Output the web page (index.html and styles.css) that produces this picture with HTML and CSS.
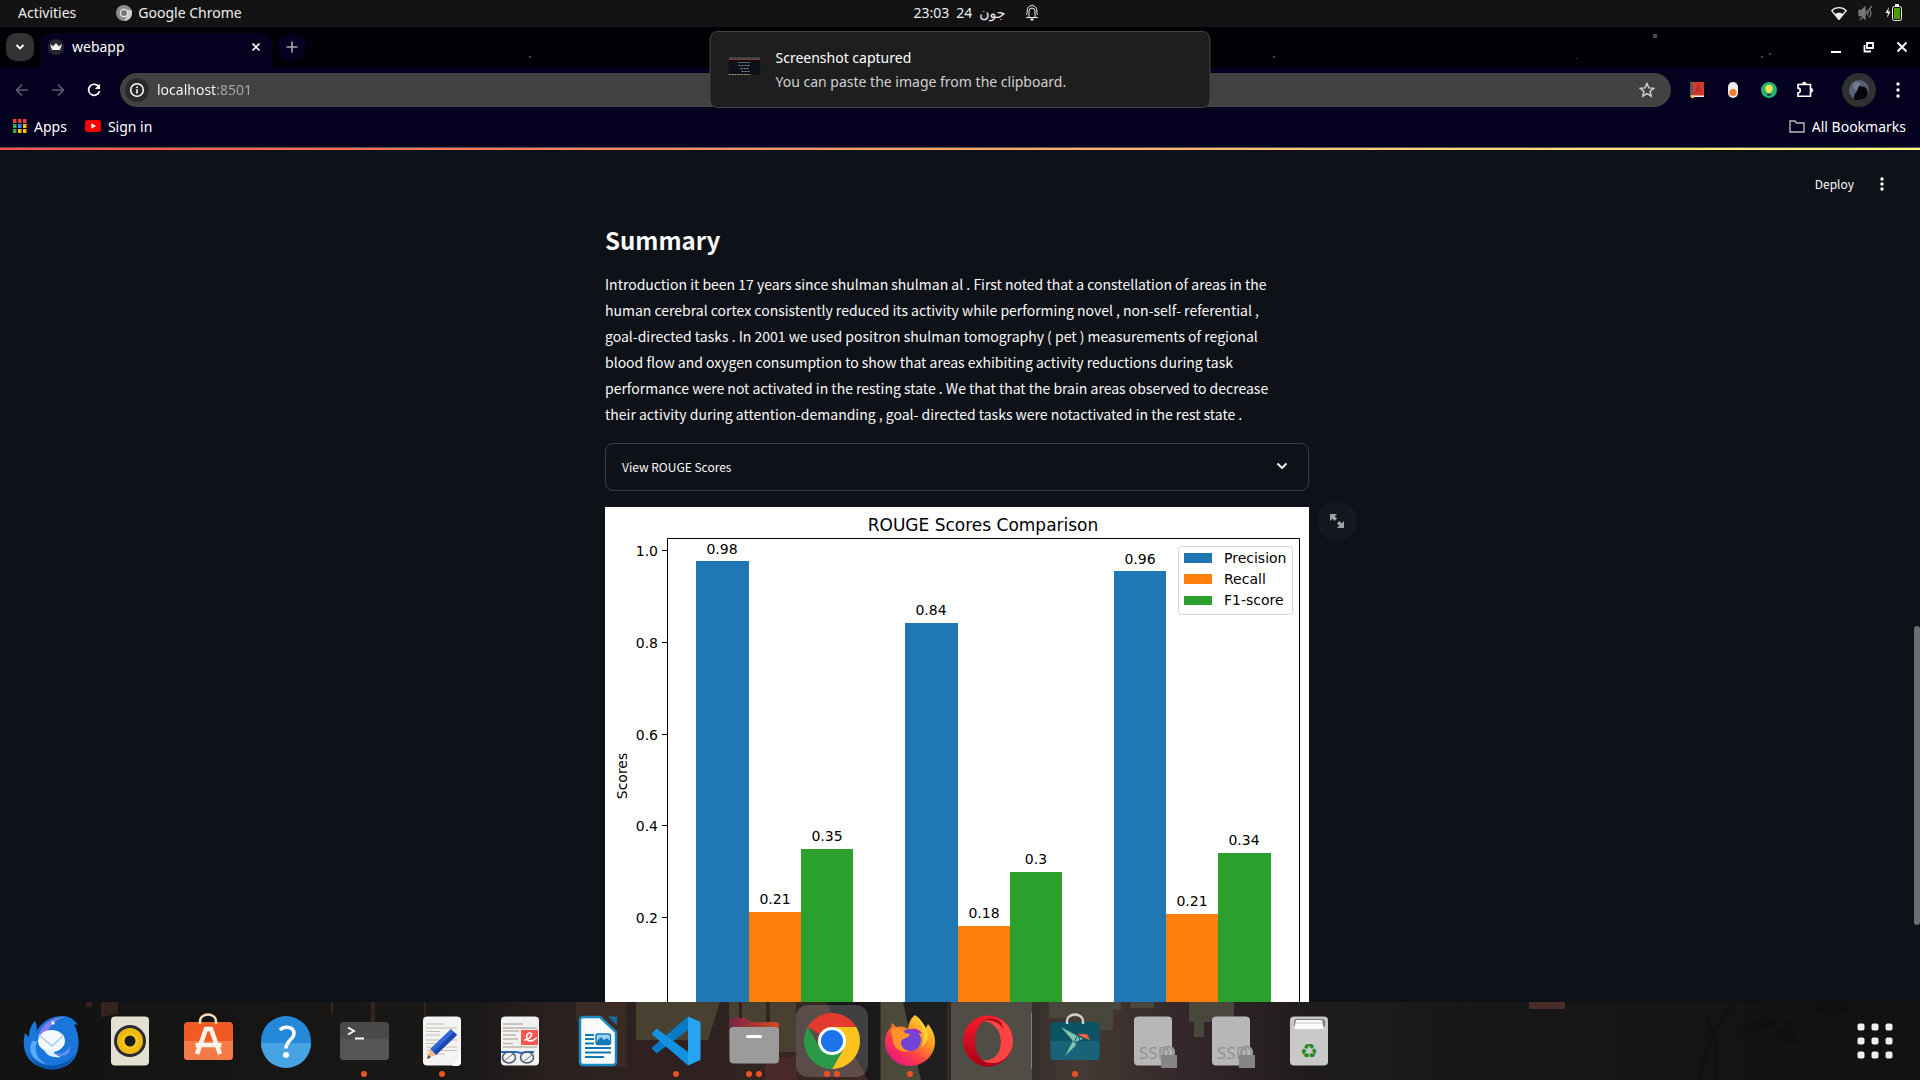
FILE: index.html
```html
<!DOCTYPE html>
<html lang="en">
<head>
<meta charset="utf-8">
<title>webapp</title>
<link rel="stylesheet" href="styles.css">
</head>
<body>
<div class="desktop">

  <header class="topbar">
    <div class="topbar-side">
      <button class="top-btn">Activities</button>
      <button class="top-btn app-menu">
        <svg width="16" height="16" viewBox="0 0 16 16"><circle cx="8" cy="8" r="8" fill="#8c8c8c"/><path d="M8 5h7.4A8 8 0 0 1 8 16l3.500-6z" fill="#cfcfcf"/><circle cx="8" cy="8" r="4.200" fill="#e8e8e8"/><circle cx="8" cy="8" r="3" fill="#777"/></svg>
        Google Chrome
      </button>
    </div>
    <button class="top-btn clock"><span>23:03</span><span>24</span><span lang="ur">جون</span>
      <svg class="bell" width="14" height="17" viewBox="0 0 14 17" fill="none" stroke="#eee"><path d="M1 13.500h12M4 13V7a3 3 0 0 1 6 0v6M1.500 11c.5-1 .7-2 .7-4.500a4.800 5 0 0 1 9.600 0c0 2.500.2 3.500.7 4.500"/><path d="M5.500 15h3l-1.500 1.500z" fill="#eee"/></svg>
    </button>
    <div class="topbar-side status">
      <svg width="16" height="14" viewBox="0 0 16 14"><path d="M8 13.500L.8 4.600C4.500.5 11.500.5 15.200 4.600z" fill="none" stroke="#eee" stroke-width="1.300"/><path d="M8 13.500L3.800 8.300c2-2 6.400-2 8.400 0z" fill="#eee"/></svg>
      <svg width="16" height="16" viewBox="0 0 16 16" fill="none" stroke="#777" stroke-width="1.300"><path d="M1 5.500h2.500L7 2v12l-3.500-3.500H1z" fill="#777"/><path d="M9 5.500c1.500 1.500 1.500 3.500 0 5M11 3.500c2.600 2.600 2.600 6.400 0 9M2 15L14 1"/></svg>
      <svg width="17" height="17" viewBox="0 0 17 17"><path d="M4 3L.5 9H3l-1 5 3.500-6.500H3.200z" fill="#eee"/><rect x="7.500" y="2.500" width="9" height="14" rx="2" fill="none" stroke="#eee"/><rect x="10" y="0" width="4" height="2" fill="#eee"/><rect x="9" y="4" width="6" height="11" fill="#4e9a06"/></svg>
    </div>
  </header>

  <section class="tabstrip">
    <button class="tab-search" aria-label="Search tabs"><svg width="10" height="10" viewBox="0 0 10 10" fill="none" stroke="#fff" stroke-width="1.800"><path d="M1.500 3L5 6.500 8.500 3"/></svg></button>
    <div class="tab">
      <svg width="16" height="16" viewBox="0 0 16 16"><circle cx="8" cy="8" r="8" fill="#262730"/><path d="M2 5l3 2.200L8 4l3 3.200L14 5l-2 6H4z" fill="#f2f2f2"/></svg>
      <span class="tab-title">webapp</span>
      <button class="icon-btn small" aria-label="Close tab"><svg width="10" height="10" viewBox="0 0 10 10" stroke="#fff" stroke-width="1.700"><path d="M1.500 1.500l7 7M8.500 1.500l-7 7"/></svg></button>
    </div>
    <button class="new-tab" aria-label="New tab"><svg width="12" height="12" viewBox="0 0 12 12" stroke="#aaa" stroke-width="1.600"><path d="M6 .5v11M.5 6h11"/></svg></button>
    <svg class="stars" fill="#4a4a48"><rect x="223" y="29" width="2" height="2"/><rect x="967" y="29" width="2" height="2"/><rect x="1347" y="7" width="4" height="4"/><rect x="1270" y="31" width="1" height="1"/><rect x="1455" y="29" width="2" height="2"/><rect x="1463" y="26" width="2" height="2"/></svg>
    <div class="window-controls">
      <button class="icon-btn" aria-label="Minimise"><svg width="12" height="12" viewBox="0 0 12 12"><path d="M1 10h10v2H1z" fill="#fff"/></svg></button>
      <button class="icon-btn" aria-label="Restore"><svg width="12" height="12" viewBox="0 0 12 12" fill="none" stroke="#fff" stroke-width="1.800"><path d="M4 2h6v5H4zM1.500 4v6.500H8"/></svg></button>
      <button class="icon-btn" aria-label="Close"><svg width="12" height="12" viewBox="0 0 12 12" stroke="#fff" stroke-width="1.900"><path d="M1.500 1.500l9 9M10.500 1.500l-9 9"/></svg></button>
    </div>
  </section>

  <section class="toolbar">
    <div class="nav-buttons">
      <button class="icon-btn" aria-label="Back"><svg width="14" height="14" viewBox="0 0 14 14" fill="none" stroke="#5d5b70" stroke-width="1.600"><path d="M13 7H2M7 1.500L1.500 7 7 12.500"/></svg></button>
      <button class="icon-btn" aria-label="Forward"><svg width="14" height="14" viewBox="0 0 14 14" fill="none" stroke="#5d5b70" stroke-width="1.600"><path d="M1 7h11M7 1.500L12.500 7 7 12.500"/></svg></button>
      <button class="icon-btn" aria-label="Reload"><svg width="14" height="14" viewBox="0 0 14 14"><path d="M12 4.200A5.500 5.500 0 1 0 12.500 8" fill="none" stroke="#fff" stroke-width="1.700"/><path d="M13 .8V6H7.800z" fill="#fff"/></svg></button>
    </div>
    <div class="omnibox">
      <button class="site-info" aria-label="Site information"><svg width="16" height="16" viewBox="0 0 16 16"><circle cx="8" cy="8" r="6.300" fill="none" stroke="#fff" stroke-width="1.500"/><path d="M7.200 7.200h1.600v4.300H7.200zM7.200 4.500h1.600v1.600H7.200z" fill="#fff"/></svg></button>
      <input class="address" type="text" aria-label="Address" value="localhost:8501">
      <button class="icon-btn" aria-label="Bookmark this tab"><svg width="16" height="16" viewBox="0 0 16 16" fill="none" stroke="#ccc" stroke-width="1.500"><path d="M8 1.500l1.900 4.400 4.800.4-3.600 3.100 1.100 4.700L8 11.600l-4.200 2.500 1.100-4.700L1.300 6.300l4.800-.4z"/></svg></button>
    </div>
    <div class="extensions">
      <button class="icon-btn" aria-label="Dictionary"><svg width="16" height="16" viewBox="0 0 16 16"><path d="M1 0h14v14H1z" fill="#d93a2f"/><path d="M1 0h3v15H1z" fill="#5a5a5a"/><path d="M4 13.500h11V15H4z" fill="#eee"/><path d="M6.500 11L9.300 3l2.900 8M7.500 8.500h3.700" fill="none" stroke="#b52a20" stroke-width="1.300"/><path d="M2 13h3v3H2z" fill="#f6c23c"/></svg></button>
      <button class="icon-btn" aria-label="Reader"><svg width="16" height="16" viewBox="0 0 16 16"><rect x="3" y="0" width="10" height="16" rx="5" fill="#ececec"/><circle cx="8" cy="10.500" r="3.600" fill="#f5822b"/></svg></button>
      <button class="icon-btn" aria-label="Ideas"><svg width="16" height="16" viewBox="0 0 16 16"><circle cx="8" cy="8" r="8" fill="#22b573"/><path d="M8 2.500a3.800 3.800 0 0 1 2.200 6.900V11H5.800V9.400A3.800 3.800 0 0 1 8 2.500z" fill="#ffdf4d"/><path d="M6 11.500h4V14H6z" fill="#3d4a45"/></svg></button>
      <button class="icon-btn" aria-label="Extensions"><svg width="18" height="18" viewBox="0 0 18 18" fill="none" stroke="#fff" stroke-width="1.600"><path d="M2 3.500h12.500v11.700H2v-3.500a2.300 2.300 0 0 0 0-4.600z"/><path d="M6.500 3a1.800 1.800 0 0 1 3.600 0zM15 7.500a1.800 1.800 0 0 1 0 3.600z" fill="#fff" stroke-width="1"/></svg></button>
    </div>
    <button class="avatar" aria-label="Profile"><svg width="20" height="20" viewBox="0 0 20 20"><circle cx="10" cy="10" r="10" fill="#596078"/><circle cx="8" cy="6" r="4" fill="#737b91"/><path d="M5 19c0-4 1-6 3-7.500L9.500 7l2-2 1 2 2.500-.5L18 9c2 5 0 9-5 10.500C9 20.500 6.500 20 5 19z" fill="#06070c"/></svg></button>
    <button class="icon-btn" aria-label="Menu"><svg width="4" height="16" viewBox="0 0 4 16" fill="#fff"><circle cx="2" cy="2" r="1.700"/><circle cx="2" cy="8" r="1.700"/><circle cx="2" cy="14" r="1.700"/></svg></button>
  </section>

  <nav class="bookmarks">
    <a class="bookmark" href="#apps"><svg width="14" height="14" viewBox="0 0 14 14"><path d="M0 0h3.500v4H0zM5 0h3.500v4H5zM10 0h3.500v4H10z" fill="#ea4335"/><path d="M0 5h3.500v4H0zM0 10h3.500v4H0z" fill="#34a853"/><path d="M5 5h3.500v4H5z" fill="#4285f4"/><path d="M10 5h3.500v4H10zM5 10h3.500v4H5zM10 10h3.500v4H10z" fill="#fbbc04"/></svg>Apps</a>
    <a class="bookmark" href="#signin"><svg width="16" height="12" viewBox="0 0 16 12"><rect width="16" height="12" rx="3" fill="#f00"/><path d="M6.300 3.300L11 6 6.300 8.700z" fill="#fff"/></svg>Sign in</a>
    <a class="bookmark all" href="#all"><svg width="16" height="13" viewBox="0 0 16 13" fill="none" stroke="#bbb" stroke-width="1.400"><path d="M1 11.500V1h5l1.500 2H15v9H1z"/></svg>All Bookmarks</a>
  </nav>

  <main class="app">
    <div class="decoration"></div>
    <header class="app-header">
      <button class="deploy">Deploy</button>
      <button class="icon-btn" aria-label="App menu"><svg width="4" height="14" viewBox="0 0 4 14" fill="#fafafa"><circle cx="2" cy="2" r="1.700"/><circle cx="2" cy="7" r="1.700"/><circle cx="2" cy="12" r="1.700"/></svg></button>
    </header>
    <div class="column">
      <h2>Summary</h2>
      <p>Introduction it been 17 years since shulman shulman al . First noted that a constellation of areas in the<br>human cerebral cortex consistently reduced its activity while performing novel , non-self- referential ,<br>goal-directed tasks . In 2001 we used positron shulman tomography ( pet ) measurements of regional<br>blood flow and oxygen consumption to show that areas exhibiting activity reductions during task<br>performance were not activated in the resting state . We that that the brain areas observed to decrease<br>their activity during attention-demanding , goal- directed tasks were notactivated in the rest state .</p>
      <details class="expander">
        <summary><span>View ROUGE Scores</span><svg width="12" height="12" viewBox="0 0 12 12" fill="none" stroke="#fafafa" stroke-width="1.900"><path d="M1.500 3.500L6 8l4.500-4.500"/></svg></summary>
      </details>
      <figure class="chart">
        <svg class="plot" viewBox="0 0 704 560" role="img" aria-label="ROUGE Scores Comparison">
          <rect width="704" height="560" fill="#fff"/>
          <g fill="#1f77b4"><rect x="91" y="54" width="53" height="449"/><rect x="300" y="116" width="53" height="387"/><rect x="509" y="64" width="52" height="439"/></g>
          <g fill="#ff7f0e"><rect x="144" y="405" width="52" height="98"/><rect x="353" y="419" width="52" height="84"/><rect x="561" y="407" width="52" height="96"/></g>
          <g fill="#2ca02c"><rect x="196" y="342" width="52" height="161"/><rect x="405" y="365" width="52" height="138"/><rect x="613" y="346" width="53" height="157"/></g>
          <path d="M62.500 503V31.500H694.500V503M57 43.500h5M57 135.500h5M57 227.500h5M57 318.500h5M57 410.500h5" fill="none" stroke="#000"/>
          <text class="plot-title" x="378" y="24" text-anchor="middle">ROUGE Scores Comparison</text>
          <g class="plot-text" text-anchor="end"><text x="53" y="49">1.0</text><text x="53" y="141">0.8</text><text x="53" y="233">0.6</text><text x="53" y="324">0.4</text><text x="53" y="416">0.2</text></g>
          <g class="plot-text" text-anchor="middle">
            <text x="117" y="47">0.98</text><text x="170" y="397">0.21</text><text x="222" y="334">0.35</text>
            <text x="326" y="108">0.84</text><text x="379" y="411">0.18</text><text x="431" y="357">0.3</text>
            <text x="535" y="57">0.96</text><text x="587" y="399">0.21</text><text x="639" y="338">0.34</text>
            <text transform="translate(22 269) rotate(-90)">Scores</text>
          </g>
          <rect x="573.500" y="39.500" width="114" height="68" rx="3" fill="#fff" stroke="#d4d4d4"/>
          <path d="M579 46h28v10h-28z" fill="#1f77b4"/><path d="M579 67h28v10h-28z" fill="#ff7f0e"/><path d="M579 89h28v9h-28z" fill="#2ca02c"/>
          <g class="plot-text"><text x="619" y="56">Precision</text><text x="619" y="77">Recall</text><text x="619" y="98">F1-score</text></g>
        </svg>
        <button class="fullscreen" aria-label="View fullscreen"><svg width="14" height="14" viewBox="0 0 14 14" fill="#a0a2a6"><path d="M0 0h7L4.700 2.300l2.300 2.300L4.600 7 2.300 4.700 0 7zM14 14H7l2.300-2.300L7 9.400 9.400 7l2.300 2.300L14 7z"/></svg></button>
      </figure>
    </div>
    <div class="scroll-thumb"></div>
  </main>

  <nav class="dock" aria-label="Dock">
    <svg class="wallpaper" viewBox="0 0 1920 78" preserveAspectRatio="none">
      <defs><linearGradient id="wall"><stop offset="0" stop-color="#121212"/><stop offset=".25" stop-color="#1b1918"/><stop offset=".29" stop-color="#2b2120"/><stop offset=".38" stop-color="#30231f"/><stop offset=".46" stop-color="#402b26"/><stop offset=".52" stop-color="#2a2425"/><stop offset=".56" stop-color="#463a34"/><stop offset=".62" stop-color="#33262a"/><stop offset=".68" stop-color="#201c1e"/><stop offset=".75" stop-color="#191818"/><stop offset="1" stop-color="#111"/></linearGradient></defs>
      <rect width="1920" height="78" fill="url(#wall)"/>
      <path d="M101 0h17v12l-17 3zM86 0h6v5h-6zM371 0h4v45h-4zM331 0h2v13h-2zM424 0h2v14h-2z" fill="#35231f"/>
      <path d="M576 0h50v65h-36V20h-14z" fill="#3c2a24"/><path d="M636 0h84l-12 38h-72zM729 0h10v38h-10zM742 0h24v38h-24zM770 0h26v50h-26z" fill="#484031"/>
      <path d="M634 38h90v40h-90z" fill="#302021"/><path d="M765 55h32v23h-32z" fill="#49282a"/>
      <path d="M826 0h54v78h-12z" fill="#19191c"/><path d="M881 0h22l18 78h-40z" fill="#4b4939"/><path d="M903 0h44v78h-26z" fill="#201f20"/>
      <path d="M951 0h81v78h-81z" fill="#504d46"/><path d="M1049 0h72v8h-8v20h-32v-12h-32zM1130 0h24v6h-24zM1189 0h45v20h-30v15h-10V20h-5z" fill="#49463b"/>
      <path d="M1529 0h36v7h-36z" fill="#482e28"/>
      <path d="M1740 30q20-20 42-12-15 15-42 12zM1770 35l22-18 5 25zM1810 5q25-10 45 0-25 15-45 0z" fill="#101010"/>
      <path d="M1700 76q8-45 34-74M1716 77q4-40-9-60" fill="none" stroke="#101010" stroke-width="3"/>
    </svg>

    <button class="dock-item" aria-label="Thunderbird"><svg viewBox="0 0 72 72"><path d="M19 16c3 5 2 11-1 16 3-10 13-21 28-21 7 0 12 3 16 9l-4-1c10 20 4 45-21 45C14 64 4 47 9 28l4 4c0-7 2-12 6-16z" fill="#1976db"/><path d="M11 43c4 19 33 25 48 6-8 21-41 23-48-6z" fill="#0b55aa"/><path d="M22 31c5-13 15-19 27-19-11 3-13 8-17 13z" fill="#8b7cf0"/><path d="M16 36c-5 12 2 20 14 23-10-6-12-14-9-23z" fill="#5aa9f7"/><ellipse cx="35.500" cy="36" rx="13.500" ry="11" fill="#f4f9ff"/><path d="M23 30l13 11 12-11" fill="none" stroke="#a8cdee" stroke-width="1.500"/><path d="M27 43c3 8 10 10 18 9-5-2-7-4-8-7z" fill="#e1f0ff"/><path d="M37 48c9 2 15-1 16-7 3 9-7 13-16 7z" fill="#6f8ff0"/><circle cx="37" cy="18" r="1.700" fill="#e8f4ff"/></svg></button>

    <button class="dock-item" aria-label="Rhythmbox"><svg viewBox="0 0 72 72"><rect x="17" y="11.500" width="38" height="49" rx="4" fill="#e3dfd2"/><circle cx="36" cy="36" r="16" fill="#2b2b33"/><circle cx="36" cy="36" r="13" fill="#eeb911"/><circle cx="36" cy="36" r="8" fill="#f8c91e"/><circle cx="36" cy="36" r="5.500" fill="#1d1d1d"/></svg></button>

    <button class="dock-item" aria-label="Software"><svg viewBox="0 0 72 72"><rect x="12" y="17" width="49" height="38" rx="4" fill="#f15a24"/><path d="M12 36h49v15a4 4 0 0 1-4 4H16a4 4 0 0 1-4-4z" fill="#f47a48"/><path d="M28 19v-3a8 6.500 0 0 1 16 0v3" fill="none" stroke="#f3dfb1" stroke-width="2.500"/><path d="M25 49l9-25h5l9 25M23.500 40h26" fill="none" stroke="#fff5ea" stroke-width="4.500"/></svg></button>

    <button class="dock-item" aria-label="Help"><svg viewBox="0 0 72 72"><circle cx="36" cy="36" r="25" fill="#2388d8"/><path d="M11 38a25 25 0 0 0 50 0z" fill="#46a4e4"/><path d="M30 25c4-4 14-4 14 3.500 0 6-8 7-8 15" fill="none" stroke="#fff" stroke-width="3.500"/><circle cx="36" cy="50" r="3" fill="#fff"/></svg></button>

    <button class="dock-item" aria-label="Terminal"><svg viewBox="0 0 72 72"><rect x="12" y="17" width="49" height="38" rx="4" fill="#4a4a4a"/><path d="M12 34h49v17a4 4 0 0 1-4 4H16a4 4 0 0 1-4-4z" fill="#555"/><path d="M20 22.500l6 3.500-6 3.500M27 33.500h9" fill="none" stroke="#fff" stroke-width="1.800"/></svg><span class="dots"><i></i></span></button>

    <button class="dock-item" aria-label="Text Editor"><svg viewBox="0 0 72 72"><rect x="17" y="11.500" width="38" height="49" rx="4" fill="#f3f3f3"/><path d="M20 19h19M20 23h31M20 26.500h14M20 30h14M20 35h31M20 38.500h15M20 42h31M20 45.500h31M20 49h19" stroke="#c6c0b0" stroke-width="1.200"/><path d="M55 50v7a4 4 0 0 1-4 4h-5z" fill="#fff"/><path d="M45 24l6 6-21 20-6-6z" fill="#3267dc"/><path d="M48 27l3 3-21 20-3-3z" fill="#1d48b0"/><path d="M24 44l6 6-9 4z" fill="#f3be86"/><path d="M22.500 50l2 2.500L21 54z" fill="#333"/></svg><span class="dots"><i></i></span></button>

    <button class="dock-item" aria-label="Document Viewer"><svg viewBox="0 0 72 72"><rect x="17" y="11.500" width="38" height="49" rx="4" fill="#f1f1f1"/><path d="M19 19h20M19 23h34M19 26h16M19 30h13M19 34h15M19 38.500h10M19 42h34" stroke="#bdb7a8" stroke-width="1.300"/><path d="M37 25h17v15H37z" fill="#f4574f"/><path d="M40 35c6 0 10-7 6-7s-5 8 0 8 5-3 7-3" fill="none" stroke="#fff" stroke-width="1.600"/><path d="M17 47h15c3 0 4 1 5 1s3-1 5-1h8" fill="none" stroke="#2668c8" stroke-width="2"/><ellipse cx="25" cy="52.500" rx="6.500" ry="5.500" fill="none" stroke="#4b5a70" stroke-width="1.500"/><ellipse cx="43" cy="52.500" rx="6.500" ry="5.500" fill="none" stroke="#4b5a70" stroke-width="1.500"/><path d="M19 57l10-8M39 57l10-8" stroke="#777"/></svg></button>

    <button class="dock-item" aria-label="LibreOffice Writer"><svg viewBox="0 0 72 72"><path d="M21 12h17l16 15v30a3 3 0 0 1-3 3H21a3 3 0 0 1-3-3V15a3 3 0 0 1 3-3z" fill="#fafafa" stroke="#1d87c0" stroke-width="2.500"/><path d="M46 11.500h9v9z" fill="#156a9e"/><path d="M23 30h9M23 34h9M23 38.500h9M23 43h26M23 47.500h26M23 52h19" stroke="#1279b5" stroke-width="2"/><rect x="34" y="29" width="14.500" height="10.500" rx="2" fill="#9dd2f2" stroke="#1279b5" stroke-width="1.400"/><path d="M35 39v-3l4-4 3 3 3-2 3 3v3z" fill="#1279b5"/></svg></button>

    <button class="dock-item" aria-label="Visual Studio Code"><svg viewBox="0 0 72 72"><path d="M48 11.500L11.500 43l5 5.500L48 25z" fill="#0879c5"/><path d="M48 60.500L11.500 29l5-5.500L48 47z" fill="#1292e0"/><path d="M48 11.500l12.500 5.500v38L48 60.500z" fill="#27a5f3"/></svg><span class="dots"><i></i></span></button>

    <button class="dock-item" aria-label="Files"><svg viewBox="0 0 72 72"><defs><linearGradient id="fold"><stop stop-color="#7b2449"/><stop offset="1" stop-color="#d7491f"/></linearGradient></defs><path d="M12 27V16a3 3 0 0 1 3-3h12c3 0 4 4 7 4h23a4 4 0 0 1 4 4v8z" fill="url(#fold)"/><rect x="11.500" y="22" width="49.500" height="36.500" rx="4" fill="#9b9b9b"/><rect x="28" y="30" width="16" height="3" rx="1.500" fill="#fff"/></svg><span class="dots"><i></i><i></i></span></button>

    <button class="dock-item active" aria-label="Google Chrome"><svg viewBox="0 0 72 72"><path d="M36 36L11.750 22A28 28 0 0 1 60.250 22z" fill="#e33b2e"/><path d="M36 22h24.250A28 28 0 0 1 36 64L48 43z" fill="#fcc31e"/><path d="M11.750 22A28 28 0 0 0 36 64l12.100-21H24z" fill="#2b9a48"/><circle cx="36" cy="36" r="14" fill="#fff"/><circle cx="36" cy="36" r="11" fill="#1a73e8"/></svg><span class="dots"><i></i><i></i></span></button>

    <button class="dock-item" aria-label="Firefox"><svg viewBox="0 0 72 72"><defs><linearGradient id="fox" x1="1" y1="0" x2=".2" y2="1"><stop stop-color="#fff13c"/><stop offset=".4" stop-color="#ff9a1f"/><stop offset=".7" stop-color="#ff3b47"/><stop offset="1" stop-color="#e3118d"/></linearGradient></defs><path d="M41 10c6 4 9 9 10 15l3-6c5 6 7 12 7 18 0 13-11 24-25 24S11 50 11 37c0-6 2-11 6-15l1-4 4 4c4-1 8-1 12 2 1-6 2-10 7-14z" fill="url(#fox)"/><circle cx="36" cy="35" r="11" fill="#7143d6"/><path d="M37 24c5-1 9 1 11 5l-6-2z" fill="#a028c8"/><path d="M17 24c6-3 11 0 14 4l5 1c-1 4-6 4-8 6-3 4 1 10 8 11-9 3-17-3-17-11z" fill="#ff9328"/><path d="M43 13c7 9 9 20 4 30 11-9 8-21-4-30z" fill="#ffd43a"/></svg><span class="dots"><i></i></span></button>

    <button class="dock-item" aria-label="Opera"><svg viewBox="0 0 72 72"><defs><linearGradient id="op" x2="0" y2="1"><stop stop-color="#ff1b2d"/><stop offset="1" stop-color="#a70014"/></linearGradient></defs><path fill-rule="evenodd" d="M36 10.500a25 25.500 0 1 0 .1 0zM36 15a13 21 0 1 1-.1 0z" fill="url(#op)"/><path d="M29 16c20-9 32 6 32 20S47 65 29 55c25 6 28-39 0-39z" fill="#fb4545"/><path d="M29 16c8-4 15-3 20 1l3 8c-5-9-14-11-23-9z" fill="#a50c18"/></svg></button>

    <span class="dock-separator"></span>

    <button class="dock-item" aria-label="Snap Store"><svg viewBox="0 0 72 72"><rect x="11.500" y="17" width="49" height="38" rx="4" fill="#0d5366"/><path d="M11.500 36h49v15a4 4 0 0 1-4 4h-41a4 4 0 0 1-4-4z" fill="#186377"/><path d="M28 19v-3a8 6.500 0 0 1 16 0v3" fill="none" stroke="#d0d0d0" stroke-width="2.300"/><path d="M22 22l22 12-8 3 1 3-11 11 8-15z" fill="#82c4ab"/><path d="M39 29l3 10M39 29l-4 9" stroke="#155869"/><path d="M39 29h9l3 6-8-3z" fill="#f3623c"/></svg><span class="dots"><i></i></span></button>

    <button class="dock-item" aria-label="Drive 1"><svg viewBox="0 0 72 72"><rect x="17" y="11.500" width="38" height="49" rx="4" fill="#b7b7b7"/><text class="ssd" x="22" y="54">SSD</text><path d="M46.500 50v-3a5 5 0 0 1 10 0v3" fill="none" stroke="#999" stroke-width="3"/><rect x="44" y="50" width="16" height="13" fill="#858585"/></svg></button>
    <button class="dock-item" aria-label="Drive 2"><svg viewBox="0 0 72 72"><rect x="17" y="11.500" width="38" height="49" rx="4" fill="#b7b7b7"/><text class="ssd" x="22" y="54">SSD</text><path d="M46.500 50v-3a5 5 0 0 1 10 0v3" fill="none" stroke="#999" stroke-width="3"/><rect x="44" y="50" width="16" height="13" fill="#858585"/></svg></button>

    <button class="dock-item" aria-label="Trash"><svg viewBox="0 0 72 72"><rect x="17" y="11.500" width="38" height="49" rx="4" fill="#c9c9c9"/><rect x="21" y="14" width="31" height="9" rx="3" fill="#777"/><path d="M23 15h26l2 9H21z" fill="#fafafa"/><path d="M23 18h27" stroke="#ccc"/><text class="recycle" x="36" y="53" text-anchor="middle">♻</text></svg></button>

    <button class="dock-item show-apps" aria-label="Show Applications"><svg viewBox="0 0 72 72" fill="#f0f0f0"><rect x="18.500" y="18.500" width="7" height="7" rx="2"/><rect x="32.500" y="18.500" width="7" height="7" rx="2"/><rect x="46.500" y="18.500" width="7" height="7" rx="2"/><rect x="18.500" y="32.500" width="7" height="7" rx="2"/><rect x="32.500" y="32.500" width="7" height="7" rx="2"/><rect x="46.500" y="32.500" width="7" height="7" rx="2"/><rect x="18.500" y="46.500" width="7" height="7" rx="2"/><rect x="32.500" y="46.500" width="7" height="7" rx="2"/><rect x="46.500" y="46.500" width="7" height="7" rx="2"/></svg></button>
  </nav>

  <aside class="notification" role="status">
    <svg width="32" height="18" viewBox="0 0 32 18"><rect width="32" height="18" fill="#0c1119"/><path d="M0 1h32" stroke="#777"/><path d="M0 2.500h32" stroke="#8a3a33"/><path d="M10 5.500h12M10 8.500h11M12 11.500h9M13 14.500h8" stroke="#8892a8" stroke-dasharray="2 1"/><path d="M0 17.500h22" stroke="#b9a99a" stroke-dasharray="2 1"/></svg>
    <div class="notification-text"><strong>Screenshot captured</strong><span>You can paste the image from the clipboard.</span></div>
  </aside>
</div>
</body>
</html>
```
FILE: styles.css
```css
* { box-sizing: border-box; }

body {
  margin: 0;
  background: #0e1117;
  color: #fff;
  font-family: "Noto Sans", "DejaVu Sans", sans-serif;
  font-size: 14px;
}

svg { display: block; flex: none; }

button {
  border: 0;
  padding: 0;
  margin: 0;
  background: none;
  color: inherit;
  font: inherit;
}

.desktop {
  position: relative;
  display: flex;
  flex-direction: column;
  height: 100vh;
  overflow: hidden;
}

/* system bar */
.topbar {
  display: flex;
  align-items: center;
  height: 27px;
  padding: 0 18px 2px;
  background: #131313;
  color: #eee;
}
.topbar-side { display: flex; flex: 1; align-items: center; gap: 40px; }
.top-btn { display: flex; align-items: center; gap: 6px; line-height: 20px; }
.clock { gap: 7px; margin-left: 32px; }
.bell { margin-left: 12px; }
.status { justify-content: flex-end; gap: 11px; }

/* tabs */
.tabstrip {
  position: relative;
  display: flex;
  align-items: center;
  height: 40px;
  padding-left: 6px;
  background: #000006;
}
.tab-search {
  display: grid;
  place-items: center;
  width: 28px;
  height: 28px;
  margin-right: 6px;
  border-radius: 10px;
  background: #333;
}
.tab {
  display: flex;
  align-items: center;
  align-self: flex-end;
  gap: 8px;
  width: 232px;
  height: 34px;
  padding: 0 8px 6px;
  border-radius: 10px 10px 0 0;
  background: #030020;
}
.tab-title { flex: 1; padding-bottom: 2px; }
.icon-btn { display: grid; place-items: center; width: 24px; height: 24px; }
.small { width: 16px; }
.new-tab {
  display: grid;
  place-items: center;
  width: 28px;
  height: 28px;
  margin-left: 6px;
  border-radius: 50%;
  background: #030020;
}
.stars { flex: 1; height: 40px; min-width: 0; }
.window-controls { display: flex; gap: 9px; padding-right: 6px; }

/* address row */
.toolbar {
  display: flex;
  align-items: center;
  height: 46px;
  padding: 0 10px;
  background: #030020;
}
.nav-buttons { display: flex; gap: 12px; margin-right: 14px; }
.omnibox {
  display: flex;
  flex: 1;
  align-items: center;
  height: 34px;
  padding: 0 12px 0 5px;
  border-radius: 17px;
  background: #424242;
}
.site-info {
  display: grid;
  place-items: center;
  width: 24px;
  height: 24px;
  border-radius: 50%;
  background: #2a2a2a;
}
.address {
  flex: 1;
  min-width: 0;
  margin-left: 8px;
  padding: 0 0 2px;
  border: 0;
  outline: 0;
  background: linear-gradient(90deg, #fff 60px, #aaa 60px);
  -webkit-background-clip: text;
  background-clip: text;
  color: transparent;
  font: inherit;
}
.extensions { display: flex; gap: 12px; margin: 0 25px 0 14px; }
.avatar {
  display: grid;
  place-items: center;
  width: 34px;
  height: 34px;
  margin-right: 10px;
  border-radius: 50%;
  background: #303030;
}

.bookmarks {
  display: flex;
  align-items: center;
  gap: 18px;
  height: 34px;
  padding: 0 14px 8px 13px;
  background: #030020;
}
.bookmark {
  display: flex;
  align-items: center;
  gap: 7px;
  color: #fff;
  text-decoration: none;
}
.all { margin-left: auto; }

/* page */
.app {
  position: relative;
  flex: 1;
  min-height: 0;
  overflow: hidden;
  padding-right: 6px;
  border-top: 1px solid #55555c;
  background: #0e1117;
  color: #fafafa;
  font-family: "Noto Sans CJK SC", "Noto Sans", sans-serif;
}
.decoration { height: 2px; margin-right: -6px; background: linear-gradient(90deg, #ff4b4b, #fffd80); }
.app-header {
  display: flex;
  align-items: center;
  justify-content: flex-end;
  gap: 16px;
  height: 68px;
  padding-right: 20px;
}
.deploy { padding-bottom: 2px; font-size: 12px; }
.column { max-width: 704px; margin: 0 auto; }
h2 { margin: 0; font-size: 24px; line-height: 44px; font-weight: 700; }
p { margin: 9px 0 16px; font-size: 14px; line-height: 26px; }
.expander { border: 1px solid #3a3d44; border-radius: 8px; }
summary {
  display: flex;
  align-items: center;
  justify-content: space-between;
  height: 46px;
  padding: 0 20px 2px 16px;
  list-style: none;
  font-size: 12px;
}
.chart { position: relative; margin: 16px 0 0; }
.plot { width: 100%; height: auto; }
.plot-text { font: 14px "DejaVu Sans", sans-serif; }
.plot-title { font: 17px "DejaVu Sans", sans-serif; }
.fullscreen {
  position: absolute;
  top: -6px;
  right: -48px;
  display: grid;
  place-items: center;
  width: 40px;
  height: 40px;
  border-radius: 50%;
  background: #14171e;
}
.scroll-thumb {
  position: absolute;
  top: 56%;
  right: 0;
  width: 6px;
  height: 35%;
  border-radius: 3px;
  background: #6d6d70;
}

/* dock */
.dock {
  position: relative;
  display: flex;
  align-items: center;
  gap: 6px;
  height: 78px;
  padding: 0 9px 0 16px;
  background: #161616;
}
.wallpaper { position: absolute; inset: 0; width: 100%; height: 100%; }
.dock-item { position: relative; width: 72px; height: 72px; border-radius: 12px; }
.dock-item svg { width: 72px; height: 72px; }
.active { background: #ffffff2c; }
.dots {
  position: absolute;
  right: 0;
  bottom: 0;
  left: 0;
  display: flex;
  justify-content: center;
  gap: 4px;
}
.dots i { width: 6px; height: 6px; border-radius: 50%; background: #e95420; }
.dock-separator { position: relative; width: 1px; height: 56px; margin: 0 1px; background: #85817c; }
.show-apps { margin-left: auto; }
.ssd { font: 17px "Noto Sans", sans-serif; fill: #929292; }
.recycle { font: 20px "DejaVu Sans", sans-serif; fill: #248a1d; }

/* notification */
.notification {
  position: absolute;
  top: 31px;
  left: 50%;
  display: flex;
  align-items: center;
  gap: 15px;
  width: 501px;
  height: 77px;
  padding: 0 18px;
  transform: translateX(-50%);
  border: 1px solid #444;
  border-radius: 8px;
  background: #1e1e1e;
}
.notification svg { margin-bottom: 8px; }
.notification-text { display: flex; flex-direction: column; line-height: 24px; color: #d0d0d0; }
.notification strong { font-weight: 400; color: #fff; }
```
